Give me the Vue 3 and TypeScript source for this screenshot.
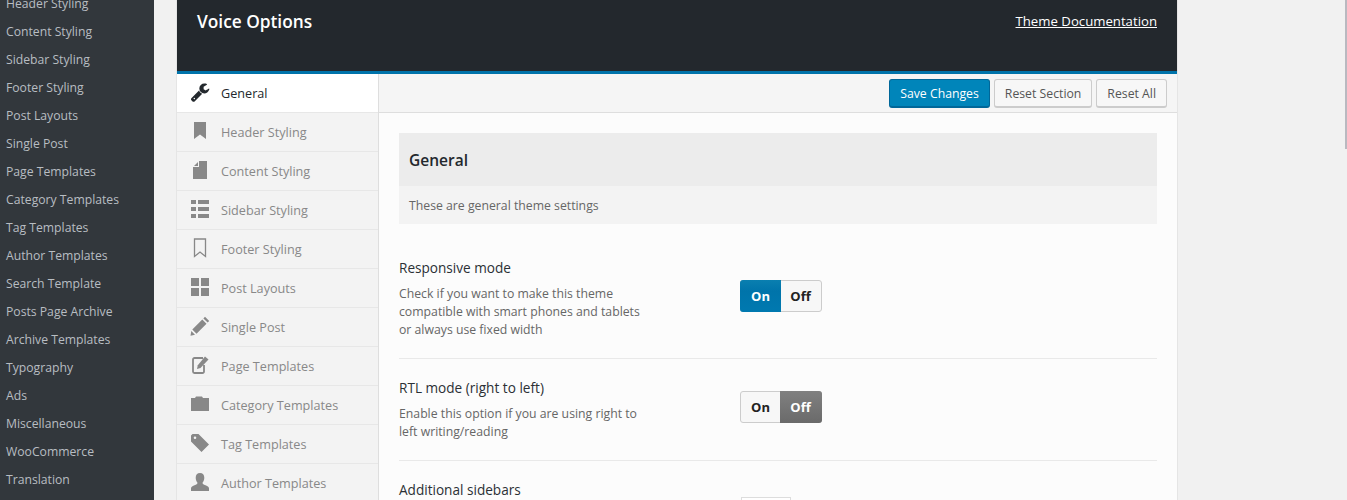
<script setup lang="ts">
const wpItems: string[] = ['Header Styling','Content Styling','Sidebar Styling','Footer Styling','Post Layouts','Single Post','Page Templates','Category Templates','Tag Templates','Author Templates','Search Template','Posts Page Archive','Archive Templates','Typography','Ads','Miscellaneous','WooCommerce','Translation']
const navItems: { label: string; icon: string }[] = [
  { label: 'General', icon: 'wrench' },
  { label: 'Header Styling', icon: 'bookmark' },
  { label: 'Content Styling', icon: 'file' },
  { label: 'Sidebar Styling', icon: 'list' },
  { label: 'Footer Styling', icon: 'bookmark-o' },
  { label: 'Post Layouts', icon: 'grid' },
  { label: 'Single Post', icon: 'pencil' },
  { label: 'Page Templates', icon: 'edit' },
  { label: 'Category Templates', icon: 'folder' },
  { label: 'Tag Templates', icon: 'tag' },
  { label: 'Author Templates', icon: 'user' },
]
</script>

<template>
  <div class="root">
    <aside class="wp-side">
      <ul class="wp-list">
        <li v-for="i in wpItems" :key="i">{{ i }}</li>
      </ul>
    </aside>
    <main class="page">
      <div class="panel">
        <header class="head">
          <h1>Voice Options</h1>
          <a class="doc">Theme Documentation</a>
        </header>
        <div class="body">
          <nav class="nav">
            <div v-for="(n, idx) in navItems" :key="n.label" class="nav-item" :class="{ active: idx === 0 }">
              <span class="ic">
                <svg width="20" height="20" viewBox="0 0 20 20">
                  <path v-if="n.icon === 'wrench'" transform="scale(0.0112)" d="M448 1472q0-26-19-45t-45-19-45 19-19 45 19 45 45 19 45-19 19-45zm644-420l-682 682q-37 37-90 37-52 0-91-37l-106-108q-38-36-38-90 0-53 38-91l681-681q39 98 114.5 173.5t173.5 114.5zm634-435q0 39-23 106-47 134-164.5 217.5t-258.5 83.5q-185 0-316.5-131.5t-131.5-316.5 131.5-316.5 316.5-131.5q58 0 121.5 16.5t107.5 46.5q16 11 16 28t-16 28l-293 169v224l193 111q5-3 79-48.5t135.5-81 70.5-35.5q15 0 23.5 10t8.5 25z" fill-rule="evenodd" />
                  <path v-else-if="n.icon === 'bookmark'" d="M4 1h12v17l-6-4.500L4 18z" />
                  <path v-else-if="n.icon === 'file'" d="M9 1h8v18H3V7h6zM4 6l4-4v4z" />
                  <path v-else-if="n.icon === 'list'" d="M1 1h5v4H1zM8 1h11v4H8zM1 8h5v4H1zM8 8h11v4H8zM1 15h5v4H1zM8 15h11v4H8z" />
                  <path v-else-if="n.icon === 'bookmark-o'" d="M4.500 1h11v17.500l-5.500-4.500-5.500 4.500z" fill="none" stroke="#888" stroke-width="1.300" />
                  <path v-else-if="n.icon === 'grid'" d="M1 1h8v8H1zM11 1h8v8h-8zM1 11h8v8H1zM11 11h8v8h-8z" />
                  <path v-else-if="n.icon === 'pencil'" d="M15 .8 19.200 5 17.600 6.600 13.400 2.400zM12.300 3.500 16.500 7.700 6.500 17.700 2.300 13.500zM1.300 15 5 18.700.5 19.700z" />
                  <g v-else-if="n.icon === 'edit'">
                    <path d="M13 3H4.500A1.500 1.500 0 0 0 3 4.500v12A1.500 1.500 0 0 0 4.500 18h8a1.500 1.500 0 0 0 1.500-1.500V10" fill="none" stroke="#888" stroke-width="1.800" />
                    <path d="M15 1.500 18.500 4.500 10.500 13 7 14l.8-3.700z" />
                  </g>
                  <path v-else-if="n.icon === 'folder'" d="M1 4h4l1-1.500h6L13 4h6v13H1z" />
                  <path v-else-if="n.icon === 'tag'" d="M1 2.500 2.500 1h6L19 11.500 11.500 19 1 8.500zM5 3.500a1.300 1.300 0 1 0 0 2.600 1.300 1.300 0 0 0 0-2.600z" fill-rule="evenodd" />
                  <path v-else-if="n.icon === 'user'" d="M10 1c2.800 0 4.300 2 4.300 4.800 0 2-.7 3.800-1.800 5 .2 1.400 1 1.800 3 2.500 2.500.8 3.500 1.800 3.500 3.200V19H1v-2.500c0-1.400 1-2.400 3.500-3.200 2-.7 2.800-1.100 3-2.500-1.100-1.200-1.800-3-1.800-5C5.700 3 7.200 1 10 1z" />
                </svg>
              </span>
              <span>{{ n.label }}</span>
            </div>
          </nav>
          <section class="content">
            <div class="toolbar">
              <button class="btn primary">Save Changes</button>
              <button class="btn">Reset Section</button>
              <button class="btn">Reset All</button>
            </div>
            <div class="form">
              <h2 class="sec-title">General</h2>
              <p class="sec-desc">These are general theme settings</p>
              <div class="opt first">
                <div class="opt-text">
                  <div class="opt-label">Responsive mode</div>
                  <div class="opt-desc">Check if you want to make this theme compatible with smart phones and tablets or always use fixed width</div>
                </div>
                <div class="switch">
                  <span class="sw-l on-blue">On</span>
                  <span class="sw-r">Off</span>
                </div>
              </div>
              <div class="opt">
                <div class="opt-text">
                  <div class="opt-label">RTL mode (right to left)</div>
                  <div class="opt-desc">Enable this option if you are using right to left writing/reading</div>
                </div>
                <div class="switch">
                  <span class="sw-l">On</span>
                  <span class="sw-r off-grey">Off</span>
                </div>
              </div>
              <div class="opt">
                <div class="opt-text">
                  <div class="opt-label">Additional sidebars</div>
                </div>
                <div class="input-stub"></div>
              </div>
            </div>
          </section>
        </div>
      </div>
    </main>
    <div class="scroll"></div>
  </div>
</template>

<style>
html, body { margin: 0; background: #f1f1f1; overflow: hidden; }
</style>

<style scoped>
.root { display: flex; height: 500px; overflow: hidden; font-family: "Open Sans", "Noto Sans", sans-serif; font-size: 12.25px; color: #444; background: #f1f1f1; position: relative; }
.wp-side { width: 154px; flex: none; background: #32373c; }
.wp-list { list-style: none; margin: -10px 0 0; padding: 0; }
.wp-list li { height: 28px; line-height: 28px; padding-left: 6px; color: #b8bdc2; white-space: nowrap; font-size: 12.2px; }
.page { flex: none; padding-left: 23px; }
.panel { width: 1000px; box-shadow: 0 0 0 1px #e5e5e5; }
.head { height: 71px; background: #23282d; border-bottom: 3px solid #0073aa; display: flex; justify-content: space-between; padding: 0 20px; box-sizing: content-box; }
.head h1 { margin: 11px 0 0; font-size: 17.3px; font-weight: 600; line-height: 21px; color: #fff; }
.doc { margin-top: 12px; color: #fff; text-decoration: underline; font-size: 13.2px; line-height: 18px; }
.body { display: flex; height: 426px; }
.nav { width: 201px; flex: none; background: #f3f3f3; border-right: 1px solid #dedede; }
.nav-item { height: 38px; border-bottom: 1px solid #e7e7e7; display: flex; align-items: center; padding-left: 13px; color: #888; white-space: nowrap; font-size: 12.65px; }
.nav-item.active { background: #fff; color: #23282d; }
.ic { width: 20px; height: 20px; margin-right: 11px; display: block; fill: #888; position: relative; top: -1px; }
.ic svg { display: block; }
.active .ic { fill: #23282d; }
.content { flex: 1; min-width: 0; background: #fcfcfc; }
.toolbar { height: 33px; border-bottom: 1px solid #dedede; background: #f5f5f5; display: flex; justify-content: flex-end; align-items: flex-start; padding: 5px 10px 0 0; gap: 4px; box-sizing: content-box; }
.btn { height: 29px; padding: 1px 10px 0; border: 1px solid #ccc; border-bottom-width: 2px; border-radius: 3px; background: #f7f7f7; color: #555; font: inherit; line-height: 25px; }
.btn.primary { background: #0085ba; border-color: #006799; color: #fff; }
.form { padding: 20px; }
.sec-title { margin: 0; height: 53px; line-height: 55px; background: #ececec; padding-left: 10px; font-size: 15.500px; font-weight: 600; color: #23282d; }
.sec-desc { margin: 0; height: 38px; line-height: 40px; background: #f3f3f3; padding-left: 10px; color: #666; }
.opt { display: flex; border-bottom: 1px solid #e9e9e9; padding: 20px 0 19px; }
.opt.first { padding-top: 35px; }
.opt-text { width: 341px; flex: none; }
.opt-label { font-weight: 500; font-size: 13.600px; line-height: 18px; color: #2b3035; }
.opt-desc { width: 245px; line-height: 18px; margin-top: 8px; color: #666; }
.switch { display: flex; height: 32px; width: 82px; margin-top: 12px; box-sizing: border-box; border: 1px solid #ccc; border-radius: 3px; font-weight: 700; font-size: 13px; color: #222; line-height: 30px; text-align: center; background: #f7f7f7; }
.first .switch { margin-top: 21px; }
.sw-l { width: 39px; flex: none; }
.sw-r { flex: 1; padding-right: 1px; }
.on-blue { width: 41px; background: linear-gradient(#0a7fb0, #0074aa 35%, #0079b0); color: #fff; margin: -1px 0 -1px -1px; border-radius: 3px 0 0 3px; line-height: 32px; }
.off-grey { background: linear-gradient(#808080, #6a6a6a); color: #fff; margin: -1px -1px -1px 0; border-radius: 0 3px 3px 0; line-height: 32px; }
.input-stub { width: 50px; height: 32px; margin: 16px 0 0 1px; box-sizing: border-box; border: 1px solid #ddd; background: #fff; }
.scroll { position: absolute; right: 0; top: 0; width: 2px; height: 149px; background: #b9b9c0; }
</style>
